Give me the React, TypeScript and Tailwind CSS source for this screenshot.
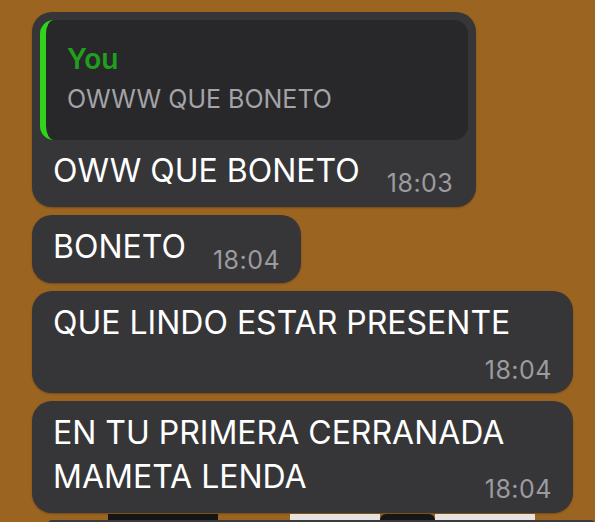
export default function App() {
    const font = { fontFamily: "Inter, 'Noto Sans', sans-serif" };
    return (
        <div
            className="w-[595px] h-[522px] overflow-hidden bg-[#9c6421] flex flex-col gap-2 pt-3 pl-8"
            style={font}
        >
            {/* Reply bubble */}
            <div className="w-[444px] shrink-0 rounded-[20px] bg-[#363638] p-2 pb-[14px] shadow-[0_1px_2px_rgba(0,0,0,0.25)]">
                <div className="h-[120px] rounded-[14px] bg-[#28282a] border-l-[6px] border-[#2fd41b] pl-[21px] pt-[24px]">
                    <div className="text-[28px] leading-[30px] font-semibold text-[#1f9f1d]">You</div>
                    <div className="mt-[10px] text-[25px] leading-[30px] text-[#a3a3a8]">OWWW QUE BONETO</div>
                </div>
                <div className="flex items-end gap-[27px] pl-[13px] pr-[13px] mt-[9px]">
                    <span className="text-[32px] leading-[44px] text-white">OWW QUE BONETO</span>
                    <span className="text-[25px] leading-[24px] tracking-[0.5px] text-[#9b9ba0] mb-[-2px]">18:03</span>
                </div>
            </div>

            <div className="self-start shrink-0 rounded-[20px] bg-[#363638] px-[21px] pt-[10px] pb-[14px] flex items-end gap-[27px] shadow-[0_1px_2px_rgba(0,0,0,0.25)]">
                <span className="text-[32px] leading-[44px] text-white">BONETO</span>
                <span className="text-[25px] leading-[24px] tracking-[0.5px] text-[#9b9ba0] mb-[-3px]">18:04</span>
            </div>

            <div className="w-[541px] shrink-0 rounded-[20px] bg-[#363638] px-[21px] pt-[10px] pb-[11px] shadow-[0_1px_2px_rgba(0,0,0,0.25)]">
                <p className="text-[32px] leading-[44px] text-white">QUE LINDO ESTAR PRESENTE</p>
                <div className="flex justify-end mt-[13px]">
                    <span className="text-[25px] leading-[24px] tracking-[0.5px] text-[#9b9ba0]">18:04</span>
                </div>
            </div>

            <div className="w-[541px] shrink-0 rounded-[20px] bg-[#363638] px-[21px] pt-[10px] pb-[14px] shadow-[0_1px_2px_rgba(0,0,0,0.25)]">
                <p className="text-[32px] leading-[44px] text-white">EN TU PRIMERA CERRANADA</p>
                <div className="flex items-end justify-between">
                    <span className="text-[32px] leading-[44px] text-white">MAMETA LENDA</span>
                    <span className="text-[25px] leading-[24px] tracking-[0.5px] text-[#9b9ba0] mb-[-2px]">18:04</span>
                </div>
            </div>

            {/* Next (cut-off) image bubble */}
            <div className="shrink-0 -mt-[7px] flex flex-col">
                <div className="flex h-[6px]">
                    <div className="w-[76px]" />
                    <div className="w-[110px] bg-[#151515]" />
                    <div className="w-[72px]" />
                    <div className="w-[90px] bg-[#e6e3df]" />
                    <div className="w-[55px] bg-[#161616] rounded-t-full" />
                    <div className="w-[100px] bg-[#e6e3df]" />
                </div>
                <div className="ml-4 h-[4px] bg-[#3a3a3c] rounded-t-[4px]" />
            </div>
        </div>
    );
}
